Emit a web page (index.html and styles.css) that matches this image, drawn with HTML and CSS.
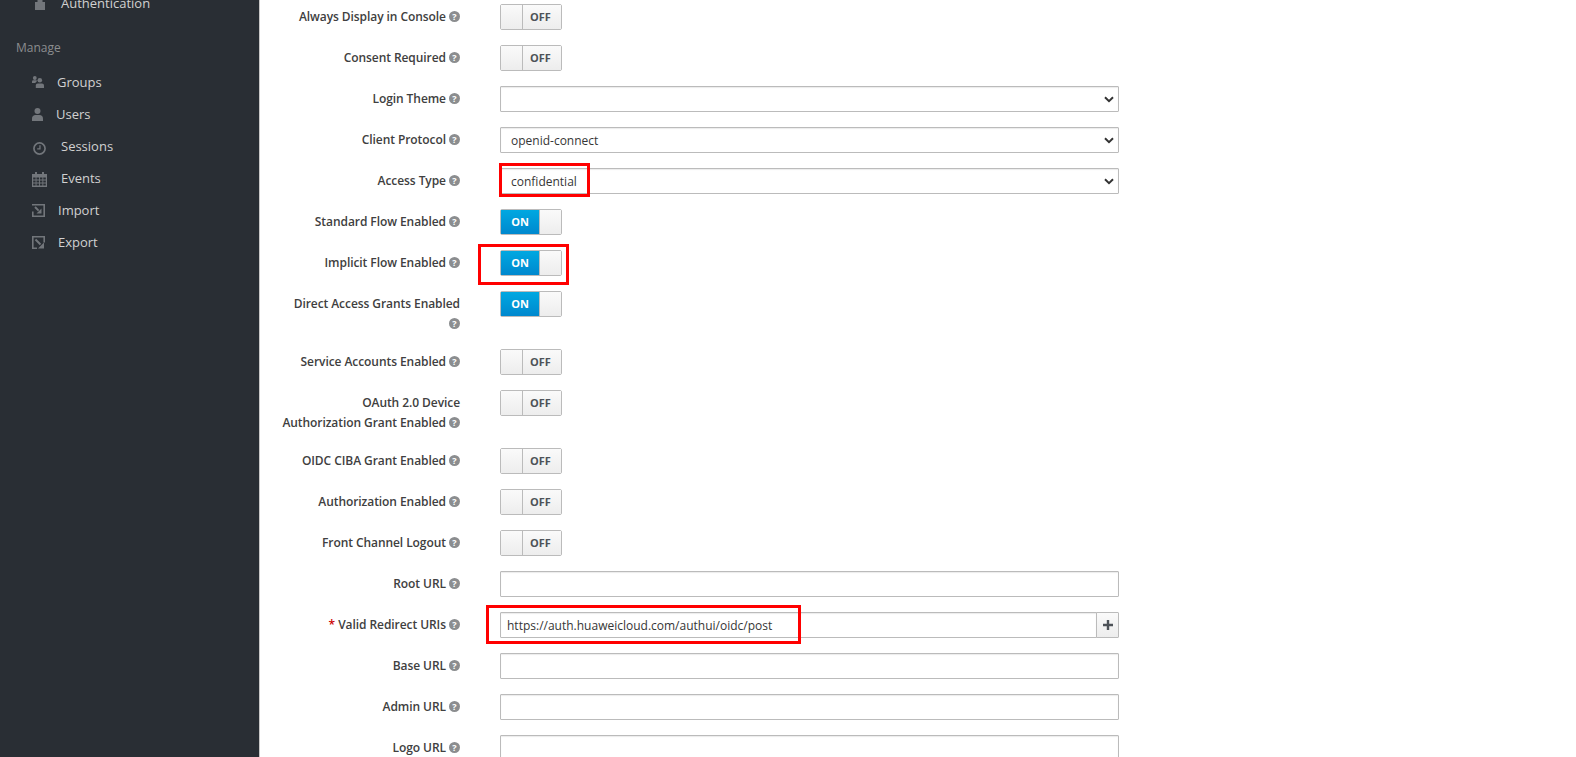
FILE: index.html
```html
<!DOCTYPE html>
<html lang="en">
<head>
  <meta charset="UTF-8" />
  <title>Client settings</title>
  <link rel="stylesheet" href="styles.css">
</head>
<body>
  <div class="page">
    <nav class="sidebar">
      <ul class="nav-list">
        <li class="nav-item">
          <svg class="nav-icon icon-lock" width="10" height="14" viewBox="0 0 10 14"><path d="M2.500 6V4a2.500 2.500 0 0 1 5 0v2H10v8H0V6z"/></svg>
          <span>Authentication</span>
        </li>
      </ul>
      <h2 class="nav-title">Manage</h2>
      <ul class="nav-list">
        <li class="nav-item">
          <svg class="nav-icon" width="12" height="12" viewBox="0 0 12 12"><circle cx="2.800" cy="2" r="1.900"/><path d="M0 7V5.600C0 4.700.7 4.200 1.500 4.200h2.600C4.600 4.200 5 4.600 5 5L3.200 7z"/><circle cx="7.800" cy="4.200" r="2.300"/><path d="M3.800 12V9.600c0-1.200.9-2 2-2h4.200c1.100 0 2 .8 2 2V12z"/></svg>
          <span>Groups</span>
        </li>
        <li class="nav-item">
          <svg class="nav-icon" width="11" height="13" viewBox="0 0 11 13"><circle cx="5.500" cy="3" r="3"/><path d="M0 13v-2.600C0 8.400 1.500 7 3.400 7h4.200C9.500 7 11 8.400 11 10.400V13z"/></svg>
          <span>Users</span>
        </li>
        <li class="nav-item">
          <svg class="nav-icon icon-clock" width="13" height="13" viewBox="0 0 14 14"><circle cx="7" cy="7" r="6" fill="none" stroke-width="1.800"/><path d="M7.500 3.500v4h-3" fill="none" stroke-width="1.400"/></svg>
          <span>Sessions</span>
        </li>
        <li class="nav-item">
          <svg class="nav-icon icon-calendar" width="15" height="15" viewBox="0 0 15 15"><path d="M3 0h2v2h5V0h2v2h3v13H0V2h3zM1.200 5.500v2h2.400v-2zm3.300 0v2h2.500v-2zm3.400 0v2h2.500v-2zm3.400 0v2h2.500v-2zM1.200 8.500v2h2.400v-2zm3.300 0v2h2.500v-2zm3.400 0v2h2.500v-2zm3.400 0v2h2.500v-2zM1.200 11.500v2h2.400v-2zm3.300 0v2h2.500v-2zm3.400 0v2h2.500v-2zm3.400 0v2h2.500v-2z" fill-rule="evenodd"/></svg>
          <span>Events</span>
        </li>
        <li class="nav-item">
          <svg class="nav-icon" width="13" height="13" viewBox="0 0 13 13"><path d="M0 0h13v13H0V7.500h1.600v3.900h9.800V1.600H0z"/><path d="M9.500 4.500v5h-5z"/><path d="M2.300 3.700 3.700 2.300 7.300 5.900 5.900 7.300z"/></svg>
          <span>Import</span>
        </li>
        <li class="nav-item">
          <svg class="nav-icon" width="13" height="13" viewBox="0 0 13 13"><path d="M0 0h13v6.500h-1.600V1.600H1.600v9.800H5V13H0z"/><path d="M12 6.500V12.500H6z"/><path d="M2.800 4.200 4.200 2.800 9.200 7.800 7.800 9.200z"/></svg>
          <span>Export</span>
        </li>
      </ul>
    </nav>

    <main class="content">
      <form class="form">
        <div class="form-row">
          <label class="form-label">Always Display in Console <i class="help">?</i></label>
          <div class="toggle"><span class="toggle-handle"></span><span class="toggle-off">OFF</span></div>
        </div>
        <div class="form-row">
          <label class="form-label">Consent Required <i class="help">?</i></label>
          <div class="toggle"><span class="toggle-handle"></span><span class="toggle-off">OFF</span></div>
        </div>
        <div class="form-row">
          <label class="form-label">Login Theme <i class="help">?</i></label>
          <select class="field"><option></option></select>
        </div>
        <div class="form-row">
          <label class="form-label">Client Protocol <i class="help">?</i></label>
          <select class="field"><option>openid-connect</option></select>
        </div>
        <div class="form-row">
          <label class="form-label">Access Type <i class="help">?</i></label>
          <select class="field"><option>confidential</option></select>
        </div>
        <div class="form-row">
          <label class="form-label">Standard Flow Enabled <i class="help">?</i></label>
          <div class="toggle"><span class="toggle-on">ON</span><span class="toggle-handle handle-right"></span></div>
        </div>
        <div class="form-row">
          <label class="form-label">Implicit Flow Enabled <i class="help">?</i></label>
          <div class="toggle"><span class="toggle-on">ON</span><span class="toggle-handle handle-right"></span></div>
        </div>
        <div class="form-row">
          <label class="form-label">Direct Access Grants Enabled<br><i class="help">?</i></label>
          <div class="toggle"><span class="toggle-on">ON</span><span class="toggle-handle handle-right"></span></div>
        </div>
        <div class="form-row">
          <label class="form-label">Service Accounts Enabled <i class="help">?</i></label>
          <div class="toggle"><span class="toggle-handle"></span><span class="toggle-off">OFF</span></div>
        </div>
        <div class="form-row">
          <label class="form-label">OAuth 2.0 Device<br>Authorization Grant Enabled <i class="help">?</i></label>
          <div class="toggle"><span class="toggle-handle"></span><span class="toggle-off">OFF</span></div>
        </div>
        <div class="form-row">
          <label class="form-label">OIDC CIBA Grant Enabled <i class="help">?</i></label>
          <div class="toggle"><span class="toggle-handle"></span><span class="toggle-off">OFF</span></div>
        </div>
        <div class="form-row">
          <label class="form-label">Authorization Enabled <i class="help">?</i></label>
          <div class="toggle"><span class="toggle-handle"></span><span class="toggle-off">OFF</span></div>
        </div>
        <div class="form-row">
          <label class="form-label">Front Channel Logout <i class="help">?</i></label>
          <div class="toggle"><span class="toggle-handle"></span><span class="toggle-off">OFF</span></div>
        </div>
        <div class="form-row">
          <label class="form-label">Root URL <i class="help">?</i></label>
          <input class="field" type="text">
        </div>
        <div class="form-row">
          <label class="form-label"><span class="required">*</span> Valid Redirect URIs <i class="help">?</i></label>
          <div class="input-group">
            <input class="field group-input" type="text" value="https://auth.huaweicloud.com/authui/oidc/post">
            <button class="add-btn" type="button">
              <svg width="10" height="10" viewBox="0 0 10 10"><path d="M3.800 0h2.400v3.800H10v2.400H6.200V10H3.800V6.200H0V3.800h3.800z"/></svg>
            </button>
          </div>
        </div>
        <div class="form-row">
          <label class="form-label">Base URL <i class="help">?</i></label>
          <input class="field" type="text">
        </div>
        <div class="form-row">
          <label class="form-label">Admin URL <i class="help">?</i></label>
          <input class="field" type="text">
        </div>
        <div class="form-row">
          <label class="form-label">Logo URL <i class="help">?</i></label>
          <input class="field" type="text">
        </div>
      </form>

      <!-- red boxes drawn over the screenshot -->
      <div class="mark mark-access"></div>
      <div class="mark mark-implicit"></div>
      <div class="mark mark-redirect"></div>
    </main>
  </div>
</body>
</html>
```

FILE: styles.css
```css
html,
body {
  margin: 0;
  padding: 0;
  height: 100%;
  overflow: hidden;
  background: #fff;
  font-family: "Open Sans", "Liberation Sans", sans-serif;
  font-size: 12px;
  color: #363636;
}
.page {
  display: flex;
  height: 757px;
  overflow: hidden;
}

/* sidebar */
.sidebar {
  box-sizing: border-box;
  flex: 0 0 260px;
  border-right: 1px solid #c8c8c8;
  background: #292e34;
  color: #d1d1d1;
}
.nav-list {
  list-style: none;
  margin: 0;
  padding: 0;
}
.nav-list:first-child {
  margin-top: -13px;
}
.nav-item {
  display: flex;
  align-items: center;
  gap: 13px;
  height: 32px;
  padding-left: 32px;
  font-size: 13px;
}
.nav-icon {
  flex: none;
  fill: #72767b;
  stroke: #72767b;
  stroke-width: 0;
}
.icon-lock {
  margin: 0 3px;
}
.icon-clock {
  margin: 4px 2px 0 1px;
}
.icon-calendar {
  margin: 2px 1px 0 0;
}
.nav-title {
  margin: 19px 0 8px 16px;
  font-size: 12px;
  line-height: 20px;
  font-weight: 400;
  color: #8b8d8f;
}

/* form */
.content {
  position: relative;
  flex: 1;
  padding: 4px 0 0 19px;
}
.form-row {
  display: flex;
  align-items: flex-start;
  margin-bottom: 15px;
}
.form-label {
  flex: 0 0 181px;
  box-sizing: border-box;
  padding-top: 3px;
  margin-right: 40px;
  text-align: right;
  line-height: 20px;
  font-weight: 600;
  letter-spacing: -0.07px;
  color: #404040;
}
.help {
  display: inline-block;
  position: relative;
  top: -1px;
  width: 11px;
  height: 11px;
  border-radius: 50%;
  background: #8b8d8f;
  color: #fff;
  font-style: normal;
  font-weight: 700;
  font-size: 9px;
  line-height: 11px;
  letter-spacing: 0;
  text-align: center;
}
.required {
  color: #c00;
}
.field {
  box-sizing: border-box;
  width: 619px;
  height: 26px;
  padding: 2px 6px;
  border: 1px solid #bbb;
  border-radius: 1px;
  background: #fff;
  box-shadow: inset 0 1px 1px rgba(3, 3, 3, 0.08);
  font: inherit;
  color: inherit;
  outline: none;
}
select.field {
  appearance: none;
  padding-left: 10px;
  background: #fff url("data:image/svg+xml,%3Csvg xmlns='http://www.w3.org/2000/svg' width='10' height='7' viewBox='0 0 10 7'%3E%3Cpath d='M1 1.300 5 5.200l4-3.900' fill='none' stroke='%23333' stroke-width='2'/%3E%3C/svg%3E") no-repeat right 4px center;
}
.input-group {
  display: flex;
  width: 619px;
}
.group-input {
  flex: 1;
  width: auto;
  min-width: 0;
}
.add-btn {
  flex: 0 0 23px;
  height: 26px;
  margin-left: -1px;
  padding: 0;
  border: 1px solid #bbb;
  border-radius: 0 1px 1px 0;
  background: linear-gradient(#fafafa, #ededed);
}
.add-btn svg {
  fill: #4d5258;
  display: block;
  margin: auto;
}

/* on/off switch */
.toggle {
  display: flex;
  box-sizing: border-box;
  width: 62px;
  height: 26px;
  border: 1px solid #bbb;
  border-radius: 2px;
  font-size: 11px;
  font-weight: 700;
  line-height: 24px;
  text-align: center;
}
.toggle-handle {
  box-sizing: border-box;
  flex: 0 0 22px;
  border-right: 1px solid #bbb;
  background: linear-gradient(#fafafa, #ededed);
}
.handle-right {
  flex: 1;
  border-right: 0;
  border-left: 1px solid #bbb;
}
.toggle-off {
  flex: 1;
  padding-right: 3px;
  color: #4d5258;
  background: linear-gradient(#fafafa, #ededed);
}
.toggle-on {
  flex: 0 0 38px;
  color: #fff;
  background: linear-gradient(#00a8e1, #0088ce);
}

/* annotation boxes */
.mark {
  position: absolute;
  box-sizing: border-box;
  border: 3px solid #f00;
}
.mark-access {
  left: 239px;
  top: 163px;
  width: 91px;
  height: 34px;
}
.mark-implicit {
  left: 218px;
  top: 244px;
  width: 91px;
  height: 41px;
}
.mark-redirect {
  left: 226px;
  top: 605px;
  width: 315px;
  height: 39px;
}
```
